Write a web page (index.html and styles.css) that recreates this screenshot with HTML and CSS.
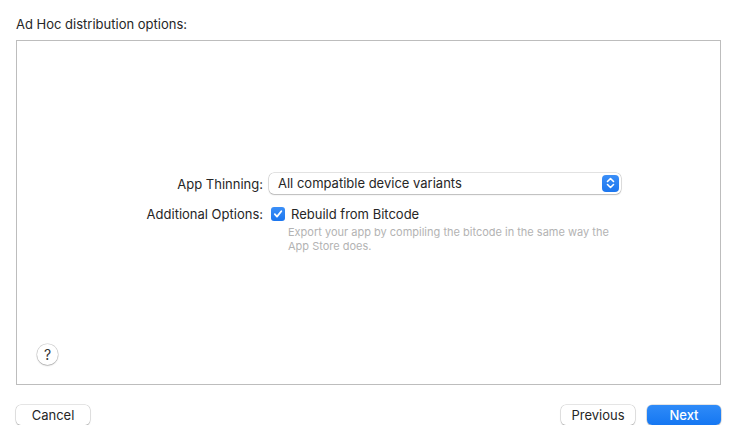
FILE: index.html
```html
<!DOCTYPE html>
<html lang="en">
<head>
  <meta charset="UTF-8">
  <title>Ad Hoc distribution options</title>
  <link rel="stylesheet" href="styles.css">
</head>
<body>
  <div class="title">Ad Hoc distribution options:</div>

  <div class="panel">
    <div class="form">
      <div class="label">App Thinning:</div>
      <div class="popup">
        <span>All compatible device variants</span>
        <span class="stepper">
          <svg width="9" height="12" viewBox="0 0 9 12">
            <path d="M1.5 4.5 L4.5 1.5 L7.5 4.5 M1.5 7.5 L4.5 10.5 L7.5 7.5" fill="none" stroke="#fff" stroke-width="1.6" stroke-linecap="round" stroke-linejoin="round"/>
          </svg>
        </span>
      </div>

      <div class="label">Additional Options:</div>
      <div class="option">
        <div class="check-row">
          <span class="checkbox">
            <svg width="10" height="10" viewBox="0 0 10 10">
              <path d="M1.8 5.2 L4 7.6 L8.3 2.2" fill="none" stroke="#fff" stroke-width="1.8" stroke-linecap="round" stroke-linejoin="round"/>
            </svg>
          </span>
          <span>Rebuild from Bitcode</span>
        </div>
        <p class="hint">Export your app by compiling the bitcode in the same way the App Store does.</p>
      </div>
    </div>
    <div class="help-row">
      <button class="help">?</button>
    </div>
  </div>

  <div class="footer">
    <button class="btn">Cancel</button>
    <div class="nav">
      <button class="btn">Previous</button>
      <button class="btn primary">Next</button>
    </div>
  </div>
</body>
</html>
```

FILE: styles.css
```css
body {
  margin: 0;
  padding: 16px 15px 0 16px;
  background-color: #ffffff;
  font-family: Inter, "Liberation Sans", Arial, sans-serif;
  font-size: 13px;
  color: #262626;
}
.title {
  line-height: 16px;
  height: 24px;
}
.panel {
  height: 343px;
  border: 1px solid #bdbdbd;
  display: grid;
  grid-template-rows: 1fr auto 1fr;
}
.form {
  grid-row: 2;
  display: grid;
  grid-template-columns: 128px 352px;
  column-gap: 6px;
  row-gap: 8px;
  padding-left: 118px;
  align-items: start;
}
.label {
  text-align: right;
  line-height: 22px;
  color: #262626;
}
.popup {
  height: 21px;
  background: #fff;
  border-radius: 5px;
  box-shadow: 0 0 0 0.5px rgba(0,0,0,0.22), 0 1px 1.5px rgba(0,0,0,0.18);
  display: flex;
  align-items: center;
  justify-content: space-between;
  padding: 0 2px 0 9px;
}
.stepper {
  width: 17px;
  height: 17px;
  border-radius: 4px;
  background: linear-gradient(#3b8ff7, #1c76ef);
  display: flex;
  align-items: center;
  justify-content: center;
}
.option {
  display: flex;
  flex-direction: column;
}
.check-row {
  display: flex;
  align-items: center;
  gap: 6px;
  height: 22px;
  padding-left: 2px;
}
.checkbox {
  width: 14px;
  height: 14px;
  border-radius: 3px;
  background: linear-gradient(#3b8ff7, #1c76ef);
  display: flex;
  align-items: center;
  justify-content: center;
}
.hint {
  margin: 0;
  padding-left: 19px;
  font-size: 11px;
  line-height: 14px;
  color: #b3b3b3;
  width: 330px;
}
.help-row {
  grid-row: 3;
  align-self: end;
  padding: 0 0 19px 20px;
}
.help {
  width: 21px;
  height: 21px;
  border-radius: 50%;
  border: none;
  background: #fff;
  box-shadow: 0 0 0 0.5px rgba(0,0,0,0.2), 0 1px 1.5px rgba(0,0,0,0.2);
  font-family: Inter, "Liberation Sans", Arial, sans-serif;
  font-size: 14px;
  color: #333;
  padding: 0;
  display: block;
}
.footer {
  display: flex;
  justify-content: space-between;
  margin-top: 20px;
}
.nav {
  display: flex;
  gap: 12px;
}
.btn {
  width: 74px;
  height: 20px;
  border: none;
  border-radius: 5px;
  background: #fff;
  box-shadow: 0 0 0 0.5px rgba(0,0,0,0.2), 0 1px 1.5px rgba(0,0,0,0.18);
  font-family: Inter, "Liberation Sans", Arial, sans-serif;
  font-size: 13px;
  color: #262626;
  padding: 0;
}
.btn.primary {
  background: linear-gradient(#2f8bf8, #1577f2);
  color: #fff;
  font-weight: 500;
}
```
